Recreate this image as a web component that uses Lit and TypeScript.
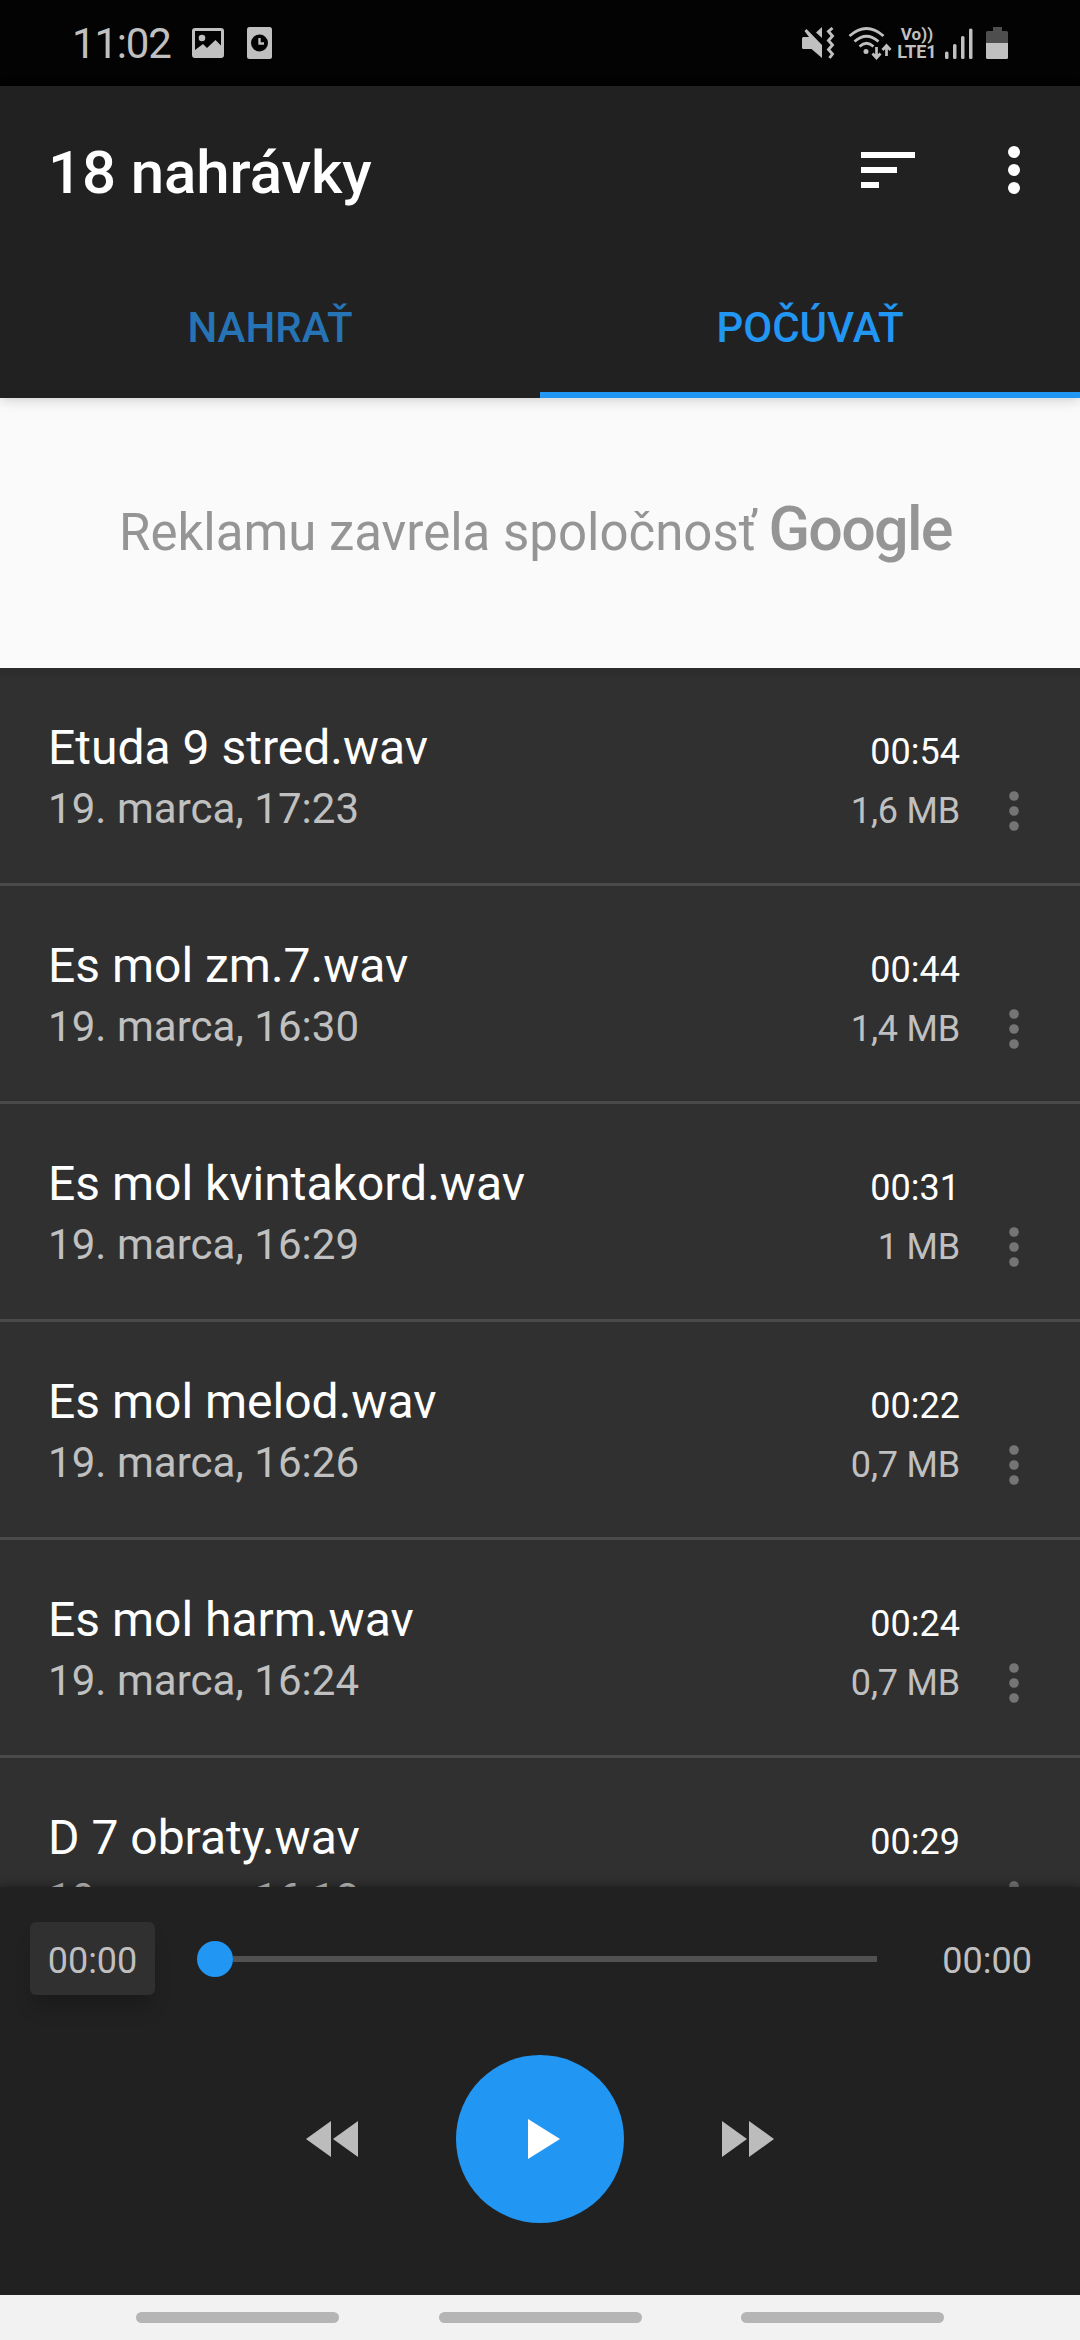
import { LitElement, html, css, svg } from "lit";
import { customElement, property } from "lit/decorators.js";

interface Recording {
  name: string;
  date: string;
  length: string;
  size: string;
}

const RECORDINGS: Recording[] = [
  { name: "Etuda 9 stred.wav", date: "19. marca, 17:23", length: "00:54", size: "1,6 MB" },
  { name: "Es mol zm.7.wav", date: "19. marca, 16:30", length: "00:44", size: "1,4 MB" },
  { name: "Es mol kvintakord.wav", date: "19. marca, 16:29", length: "00:31", size: "1 MB" },
  { name: "Es mol melod.wav", date: "19. marca, 16:26", length: "00:22", size: "0,7 MB" },
  { name: "Es mol harm.wav", date: "19. marca, 16:24", length: "00:24", size: "0,7 MB" },
  { name: "D 7 obraty.wav", date: "19. marca, 16:18", length: "00:29", size: "0,9 MB" },
];

const dots = (r: number, step: number) => svg`
  <circle cx="6" cy="6" r=${r}></circle>
  <circle cx="6" cy=${6 + step} r=${r}></circle>
  <circle cx="6" cy=${6 + step * 2} r=${r}></circle>`;

@customElement("status-bar")
export class StatusBar extends LitElement {
  static styles = css`
    :host {
      display: flex;
      align-items: center;
      justify-content: space-between;
      box-sizing: border-box;
      height: 86px;
      padding: 0 72px 0 72px;
      background: #030303;
      color: #c0c0c0;
    }
    .side { display: flex; align-items: center; }
    svg { display: block; fill: currentColor; }
    .time { font-size: 42px; line-height: 50px; letter-spacing: -1.2px; padding-top: 1px; }
    .picture { margin-left: 21px; }
    .clock { margin-left: 23px; }
    .wifi { margin-left: 13px; }
    .lte {
      display: flex;
      flex-direction: column;
      align-items: center;
      width: 40px;
      margin-left: 5px;
      font-weight: 700;
      font-size: 18px;
      line-height: 17px;
    }
    .vo { font-size: 17px; }
    .signal { margin-left: 8px; }
    .battery { margin-left: 13px; }
  `;

  render() {
    return html`
      <div class="side">
        <span class="time">11:02</span>
        <svg class="picture" width="32" height="30" viewBox="0 0 32 30">
          <path fill-rule="evenodd" d="M3 0H29A3 3 0 0 1 32 3V27A3 3 0 0 1 29 30H3A3 3 0 0 1 0 27V3A3 3 0 0 1 3 0ZM3 3V22L11 16L15 20L23.500 12L29 17.500V3Z"></path>
          <circle cx="10" cy="10" r="3.300"></circle>
        </svg>
        <svg class="clock" width="25" height="32" viewBox="0 0 25 32">
          <rect width="25" height="32" rx="2.500"></rect>
          <circle cx="12.500" cy="16" r="8.500" fill="#030303"></circle>
          <path d="M12.500 11V16.500H17" fill="none" stroke="#c0c0c0" stroke-width="2.400"></path>
        </svg>
      </div>
      <div class="side">
        <svg width="33" height="32" viewBox="0 0 33 32">
          <path d="M1.500 10H7L2.500 4L4.500 2L20 18V31L9.500 22H1.500A1.500 1.500 0 0 1 0 20.500V11.500A1.500 1.500 0 0 1 1.500 10Z"></path>
          <path d="M20 0V11L14 5.500Z"></path>
          <path d="M30.500 1L26.500 4.500L30.500 9L26.500 13.500L30.500 18L26.500 22.500L30.500 27L27.500 31" fill="none" stroke="currentColor" stroke-width="2.900"></path>
        </svg>
        <svg class="wifi" width="44" height="33" viewBox="0 0 44 33">
          <g fill="none" stroke="currentColor" stroke-width="2.700">
            <path d="M1.500 9Q18.500 -6 35.500 9"></path>
            <path d="M6.500 14.500Q18.500 4 30.500 14.500"></path>
            <path d="M11.500 19.500Q18.500 13 25.500 19.500"></path>
            <path d="M28.500 20V31M24.500 26.500L28.500 31L32.500 26.500"></path>
            <path d="M38.500 29V19M34.500 23L38.500 18.500L42.500 23"></path>
          </g>
          <circle cx="18" cy="24.500" r="2.500"></circle>
        </svg>
        <div class="lte"><span class="vo">Vo))</span><span>LTE1</span></div>
        <svg class="signal" width="28" height="32" viewBox="0 0 28 32">
          <rect x="0" y="24.500" width="3.500" height="7.500" rx="1.500"></rect>
          <rect x="8" y="17" width="3.500" height="15" rx="1.500"></rect>
          <rect x="16" y="9" width="3.500" height="23" rx="1.500"></rect>
          <rect x="24" y="1.500" width="3.500" height="30.500" rx="1.500"></rect>
        </svg>
        <svg class="battery" width="22" height="32" viewBox="0 0 22 32">
          <path fill="#4e4e4e" d="M7 0H16V4H20.500A1.500 1.500 0 0 1 22 5.500V16H0V5.500A1.500 1.500 0 0 1 1.500 4H7Z"></path>
          <path d="M0 16H22V30.500A1.500 1.500 0 0 1 20.500 32H1.500A1.500 1.500 0 0 1 0 30.500Z"></path>
        </svg>
      </div>
    `;
  }
}

@customElement("recording-row")
export class RecordingRow extends LitElement {
  @property({ attribute: false }) item!: Recording;

  static styles = css`
    :host {
      display: flex;
      flex: none;
      align-items: flex-start;
      box-sizing: border-box;
      height: 218px;
      padding: 0 60px 0 48px;
      border-bottom: 3px solid #4a4a4a;
    }
    .main { display: flex; flex: 1; flex-direction: column; gap: 8px; padding-top: 52px; }
    .name { font-size: 48px; line-height: 56px; color: #fff; }
    .date { font-size: 42px; line-height: 49px; letter-spacing: 0.05px; color: #c0c0c0; }
    .meta {
      display: flex;
      flex-direction: column;
      align-items: flex-end;
      gap: 17px;
      padding-top: 63px;
      font-size: 36px;
      line-height: 42px;
    }
    .length { color: #fff; }
    .size { letter-spacing: -0.2px; color: #c0c0c0; }
    .more { display: block; margin: 122px 0 0 48px; fill: #757575; }
  `;

  render() {
    const { name, date, length, size } = this.item;
    return html`
      <div class="main"><span class="name">${name}</span><span class="date">${date}</span></div>
      <div class="meta"><span class="length">${length}</span><span class="size">${size}</span></div>
      <svg class="more" width="12" height="42" viewBox="0 0 12 42">${dots(4.8, 15)}</svg>
    `;
  }
}

@customElement("player-panel")
export class PlayerPanel extends LitElement {
  @property({ type: Number }) progress = 0;

  static styles = css`
    :host {
      display: flex;
      flex-direction: column;
      flex: none;
      box-sizing: border-box;
      height: 408px;
      padding-top: 35px;
      background: #212121;
      color: #bfbfbf;
      font-size: 36px;
      line-height: 42px;
      box-shadow: 0 -1px 9px rgba(0, 0, 0, 0.4);
      z-index: 1;
    }
    .seek { display: flex; align-items: center; padding: 0 48px 0 30px; height: 73px; }
    .chip {
      display: flex;
      align-items: center;
      justify-content: center;
      box-sizing: border-box;
      width: 125px;
      height: 73px;
      padding-top: 5px;
      border-radius: 6px;
      background: #303030;
      box-shadow: 0 16px 20px -4px rgba(0, 0, 0, 0.2);
    }
    .slider { display: flex; align-items: center; width: 680px; height: 36px; margin-left: 42px; }
    .played { height: 6px; background: #2196f3; }
    .thumb { flex: none; width: 36px; height: 36px; border-radius: 50%; background: #2196f3; }
    .track { flex: 1; height: 6px; background: #515151; }
    .total { margin-left: auto; padding-top: 5px; }
    .controls {
      display: flex;
      align-items: center;
      justify-content: center;
      gap: 98px;
      padding-right: 1px;
      margin-top: 60px;
    }
    .skip { display: block; fill: #bcbcbc; }
    .play {
      display: flex;
      align-items: center;
      justify-content: center;
      width: 168px;
      height: 168px;
      padding: 0;
      border: 0;
      border-radius: 50%;
      background: #2196f3;
    }
    .play svg { display: block; margin-left: 8px; fill: #fff; }
  `;

  render() {
    return html`
      <div class="seek">
        <div class="chip">00:00</div>
        <div class="slider">
          <div class="played" style="width:${this.progress}%"></div>
          <div class="thumb"></div>
          <div class="track"></div>
        </div>
        <span class="total">00:00</span>
      </div>
      <div class="controls">
        <svg class="skip" width="52" height="36" viewBox="0 0 52 36"><path d="M25 0V36L0 18ZM52 0V36L27 18Z"></path></svg>
        <button class="play">
          <svg width="32" height="40" viewBox="0 0 32 40"><path d="M0 0L32 20L0 40Z"></path></svg>
        </button>
        <svg class="skip" width="52" height="36" viewBox="0 0 52 36"><path d="M0 0L25 18L0 36ZM27 0L52 18L27 36Z"></path></svg>
      </div>
    `;
  }
}

@customElement("app-root")
export class AppRoot extends LitElement {
  static styles = css`
    :host {
      display: flex;
      flex-direction: column;
      width: 1080px;
      height: 2340px;
      overflow: hidden;
      background: #303030;
      font-family: Roboto, "Noto Sans", sans-serif;
    }
    .header {
      flex: none;
      background: #212121;
      box-shadow: 0 2px 12px rgba(0, 0, 0, 0.18);
      z-index: 1;
    }
    .toolbar { display: flex; align-items: center; height: 168px; padding: 0 60px 0 48px; }
    .title {
      flex: 1;
      margin: 0;
      padding-top: 5px;
      color: #fff;
      font-size: 60px;
      font-weight: 500;
      line-height: 70px;
      letter-spacing: -0.1px;
    }
    .icon { display: block; fill: #fff; }
    .overflow { margin-left: 93px; }
    .tabs { display: grid; grid-template-columns: 1fr 1fr; height: 144px; }
    .tab {
      display: flex;
      align-items: center;
      justify-content: center;
      box-sizing: border-box;
      padding-top: 9px;
      border-bottom: 6px solid transparent;
      color: #2674b5;
      font-size: 42px;
      font-weight: 500;
      line-height: 50px;
    }
    .selected { color: #2196f3; border-bottom-color: #2196f3; }
    .notice {
      display: flex;
      flex: none;
      align-items: baseline;
      box-sizing: border-box;
      height: 270px;
      padding: 95px 0 0 119px;
      background: #fafafa;
      color: #959595;
      font-size: 51px;
      line-height: 72px;
      white-space: nowrap;
    }
    .brand { margin-left: 12px; font-size: 61px; font-weight: 500; letter-spacing: -1.700px; }
    .list {
      display: flex;
      flex: 1;
      flex-direction: column;
      min-height: 0;
      overflow: hidden;
      background: linear-gradient(#2b2b2b, #303030 12px);
    }
    .nav {
      display: flex;
      flex: none;
      align-items: center;
      justify-content: center;
      gap: 99.500px;
      height: 45px;
      background: #f2f2f2;
      z-index: 2;
    }
    .pill { width: 203px; height: 11px; border-radius: 6px; background: #b5b5b5; }
  `;

  render() {
    return html`
      <status-bar></status-bar>
      <div class="header">
        <div class="toolbar">
          <h1 class="title">18 nahrávky</h1>
          <svg class="icon" width="54" height="36" viewBox="0 0 54 36"><path d="M0 0H54V6H0ZM0 15H36V21H0ZM0 30H18V36H0Z"></path></svg>
          <svg class="icon overflow" width="12" height="48" viewBox="0 0 12 48">${dots(6, 18)}</svg>
        </div>
        <div class="tabs">
          <div class="tab">NAHRAŤ</div>
          <div class="tab selected">POČÚVAŤ</div>
        </div>
      </div>
      <div class="notice"><span>Reklamu zavrela spoločnosť</span><span class="brand">Google</span></div>
      <div class="list">${RECORDINGS.map((r) => html`<recording-row .item=${r}></recording-row>`)}</div>
      <player-panel></player-panel>
      <div class="nav"><div class="pill"></div><div class="pill"></div><div class="pill"></div></div>
    `;
  }
}
